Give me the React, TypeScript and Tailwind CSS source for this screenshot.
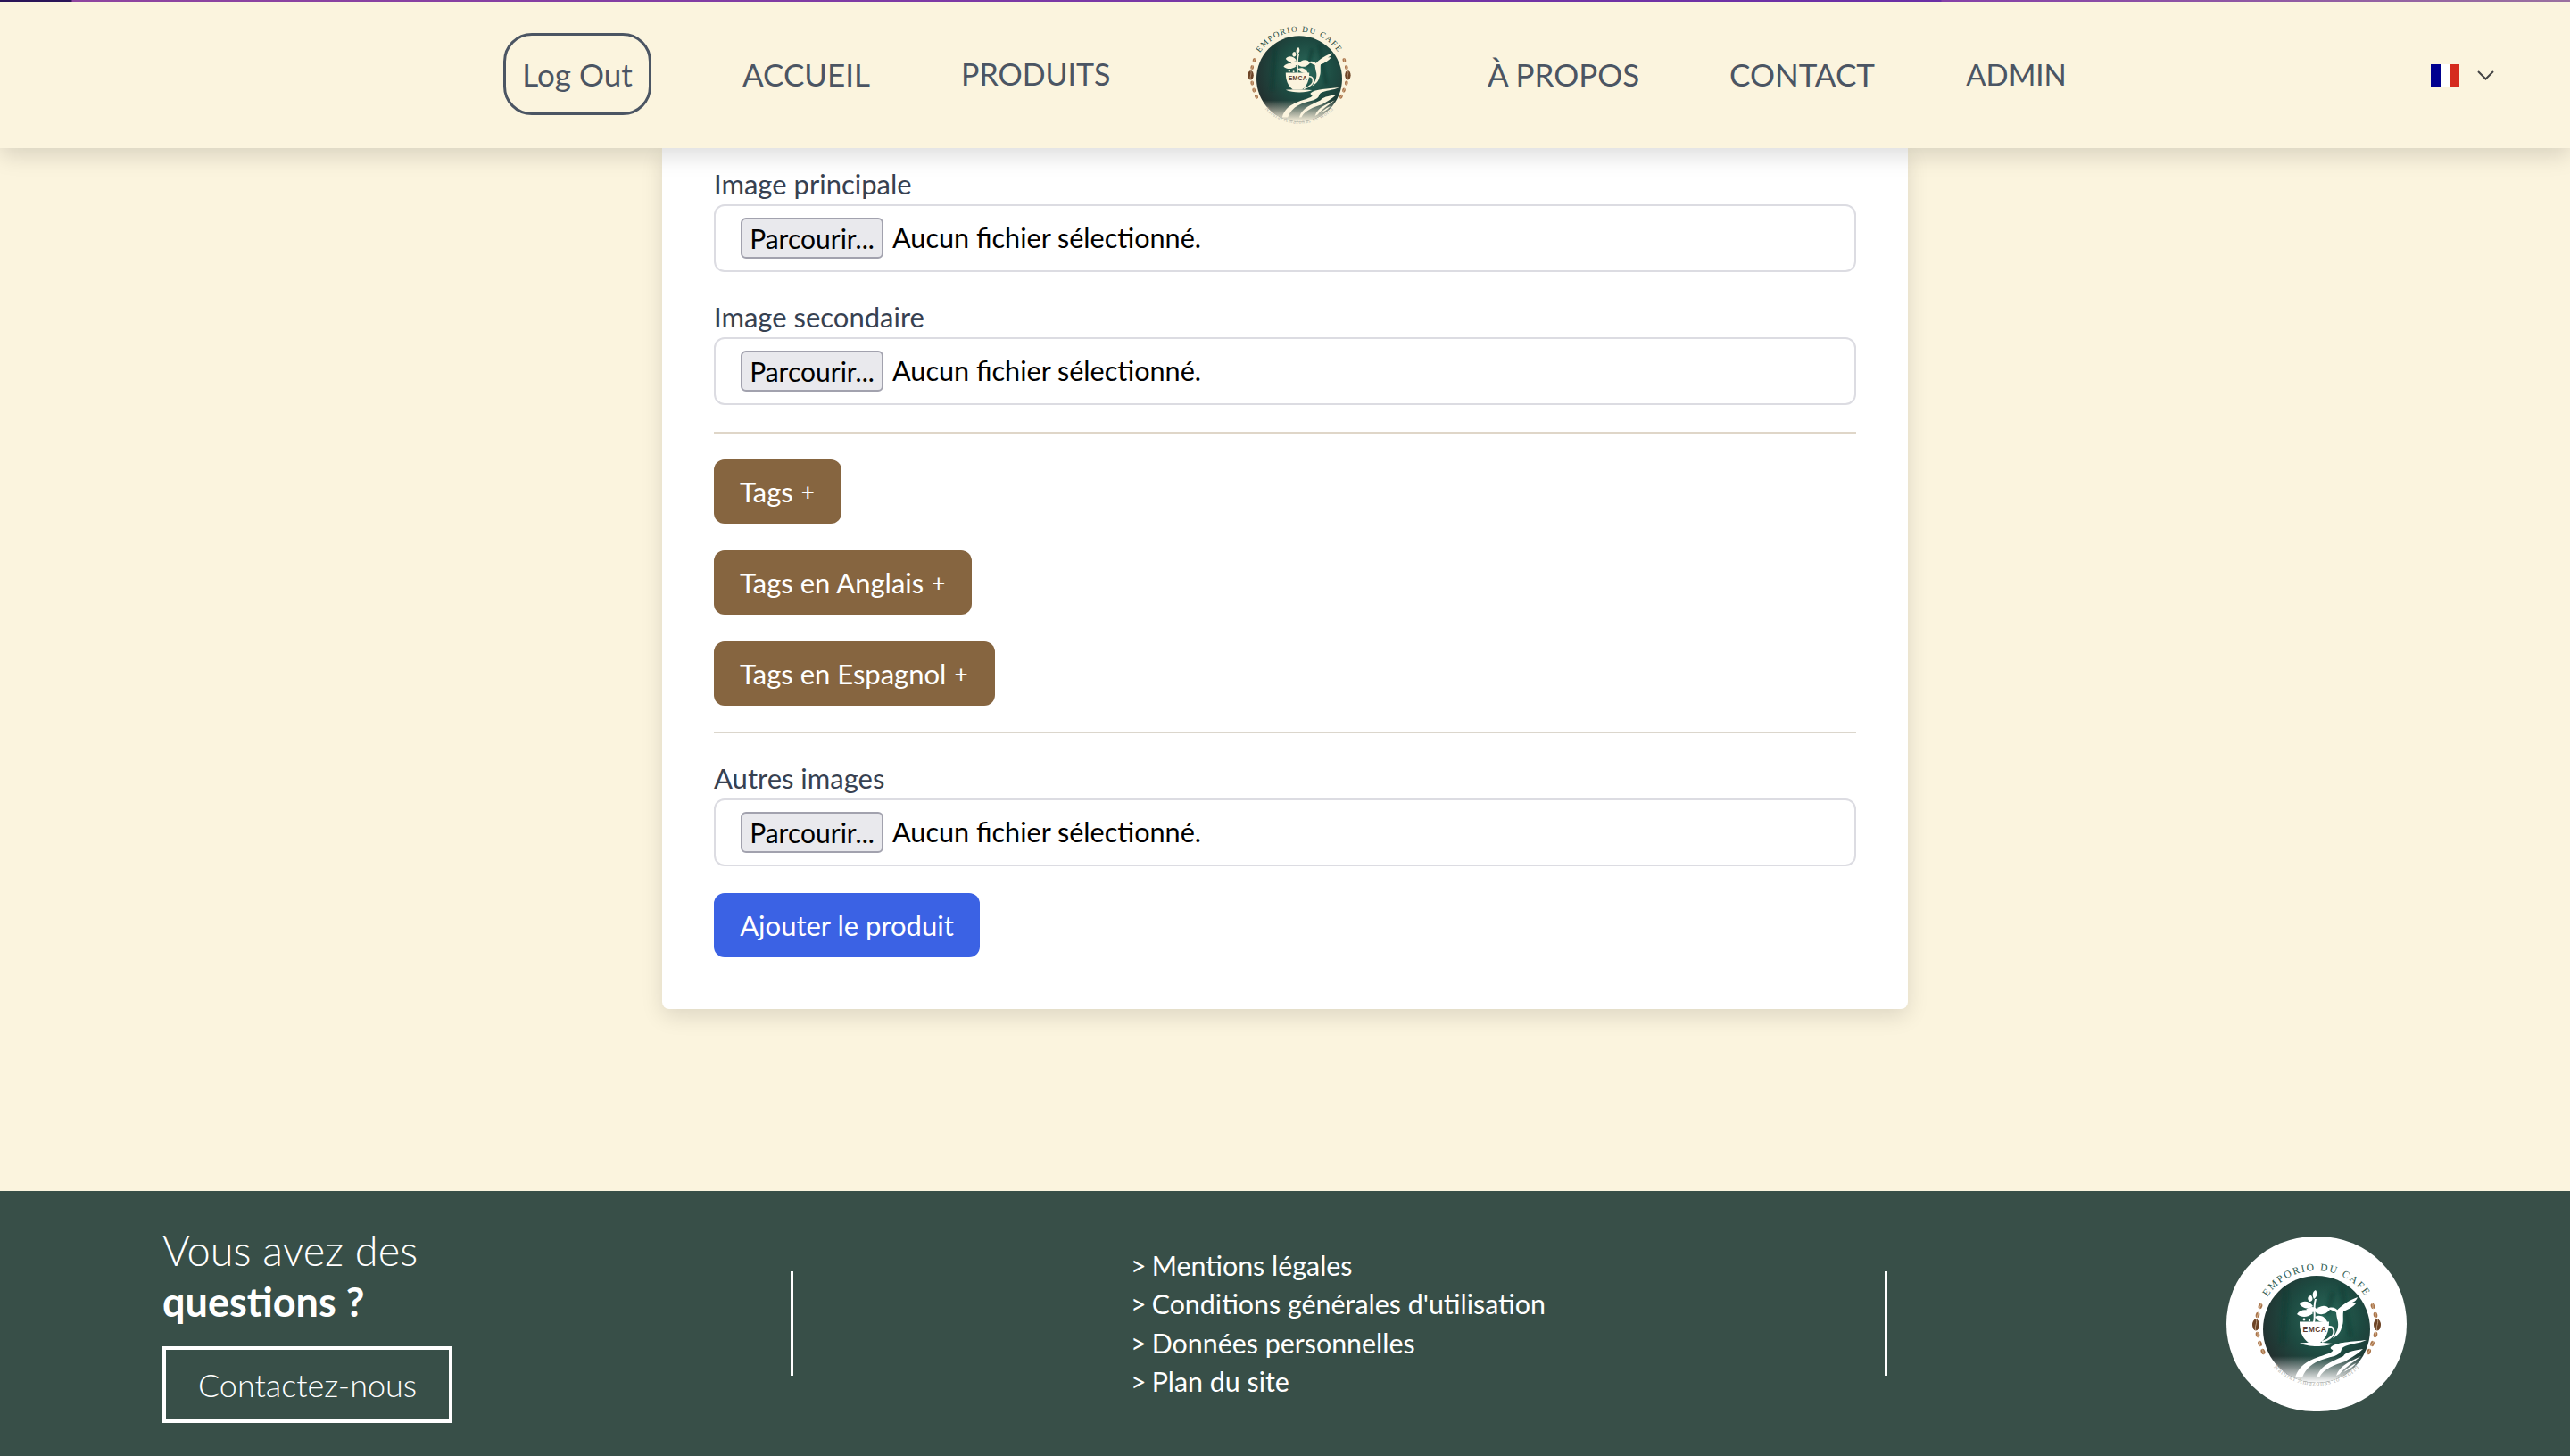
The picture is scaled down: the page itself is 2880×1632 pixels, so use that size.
const font = "font-['Lato','Liberation_Sans',sans-serif]";

function Bean({ x, y, big, angle }: { x: number; y: number; big?: boolean; angle: number }) {
  const rx = big ? 4 : 2.3;
  const ry = big ? 6.5 : 3.2;
  return (
    <g transform={`translate(${x} ${y}) rotate(${angle})`}>
      <ellipse rx={rx} ry={ry} fill={big ? "#6d4426" : "#a9744a"} />
      <path d={`M0 ${-ry} C${rx * 0.6} ${-ry * 0.3} ${-rx * 0.6} ${ry * 0.3} 0 ${ry}`} stroke="#f2dcc0" strokeWidth="0.6" fill="none" />
    </g>
  );
}

function Logo({ id, paper, ink }: { id: string; paper: string; ink: string }) {
  return (
    <svg viewBox="0 0 200 196" className="w-full h-full block">
      <defs>
        <radialGradient id={`${id}-g`} cx="58%" cy="40%" r="62%">
          <stop offset="0%" stopColor="#2b6a5b" />
          <stop offset="55%" stopColor="#1d4a41" />
          <stop offset="100%" stopColor="#22302f" />
        </radialGradient>
        <linearGradient id={`${id}-f`} x1="0" y1="0" x2="0" y2="1">
          <stop offset="0%" stopColor={paper} stopOpacity="0" />
          <stop offset="100%" stopColor={paper} stopOpacity="1" />
        </linearGradient>
        <filter id={`${id}-b`}><feGaussianBlur stdDeviation="2" /></filter>
        <path id={`${id}-top`} d="M34 104 A66 66 0 0 1 166 104" />
        <path id={`${id}-bot`} d="M33 100 A67 67 0 0 0 167 100" />
      </defs>
      <circle cx="100" cy="104" r="60" fill={`url(#${id}-g)`} />
      <g filter={`url(#${id}-b)`} stroke="#0f3a32" strokeWidth="5" opacity="0.6" fill="none">
        <path d="M66 58 L62 120" />
        <path d="M128 56 L138 112" />
        <path d="M118 62 L112 88" />
      </g>
      <path d="M48 134 A60 60 0 0 0 152 134 Z" fill={`url(#${id}-f)`} />
      <text fontFamily="'Liberation Serif',serif" fontSize="11.5" fill={ink} letterSpacing="1.8" textAnchor="middle">
        <textPath href={`#${id}-top`} startOffset="50%">EMPORIO DU CAFE</textPath>
      </text>
      <text fontFamily="'Liberation Serif',serif" fontSize="7.6" fill="#b5b5b0" letterSpacing="0.9" textAnchor="middle">
        <textPath href={`#${id}-bot`} startOffset="50%">Natural Amazonas to World</textPath>
      </text>
      <g fill={paper}>
        <path d="M98 70 C95 80 98 90 96 96 L98 96 C100 90 97 80 100 70 Z" />
        <path d="M99 60 C95 62 95 66 97 70 C100 68 102 64 99 60 Z" />
        <path d="M94 66 C90 66 89 70 92 73 C95 73 97 70 94 66 Z" />
        <path d="M81 76 C84 71 92 72 96 78 C91 82 85 81 81 76 Z" />
        <path d="M78 87 C82 81 91 81 96 86 C90 91 83 91 78 87 Z" />
        <path d="M98 84 C103 76 112 76 115 82 C110 88 103 89 98 84 Z" />
        <path d="M98 90 C104 87 110 90 112 96 C106 97 101 95 98 90 Z" />
        <path d="M88 82 C92 78 98 78 101 82 C97 86 92 86 88 82 Z" />
        <circle cx="86" cy="93" r="1.4" />
        <circle cx="92" cy="94" r="1.2" />
      </g>
      <g fill={paper}>
        <path d="M112 81 C117 78 122 80 125 84 L122 85 C119 83 116 82 112 81 Z" />
        <path d="M122 84 C128 76 140 70 146 68 C145 71 143 73 140 74 C142 74 144 74 145 74 C141 79 135 82 130 84 C129 90 131 96 128 102 C127 108 122 112 118 114 C122 108 125 103 124 96 C123 92 122 88 122 84 Z" />
      </g>
      <path d="M81 95.5 H114 C114 106 111 114 104 119 H91 C84 114 81 106 81 95.5 Z" fill={paper} />
      <path d="M113 101 C120 100 121 108 117 112 C114 115 110 117 106 118" fill="none" stroke={paper} strokeWidth="2" />
      <path d="M81 119.5 C90 118.5 106 118.5 118 120 C110 124 90 124 81 119.5 Z" fill={paper} />
      <text x="98" y="106.5" textAnchor="middle" fontFamily="'Liberation Sans',sans-serif" fontWeight="700" fontSize="8.6" fill="#5a3a30" letterSpacing="0.4">EMCA</text>
      <g fill={paper}>
        <path d="M156 116 C140 118 122 118 116 124 C114 127 122 126 116 130 C102 136 82 138 76 158 L84 158 C90 142 104 138 120 134 C130 130 126 127 130 124 C136 120 148 120 156 116 Z" />
        <path d="M152 126 C140 128 132 130 130 134 C118 140 104 144 100 158 L103 158 C108 148 120 144 132 140 C138 136 146 132 152 126 Z" />
        <path d="M150 134 C138 140 126 144 122 156 L126 154 C130 148 140 142 150 134 Z" />
        <path d="M144 142 C136 146 132 150 130 152 L134 150 C138 148 141 146 144 142 Z" />
      </g>
      <Bean x={37} y={78} angle={15} />
      <Bean x={34} y={88} angle={8} />
      <Bean x={32} y={99} angle={0} big />
      <Bean x={34} y={110} angle={-8} />
      <Bean x={36.5} y={120} angle={-15} />
      <Bean x={40} y={129} angle={-25} />
      <Bean x={163} y={78} angle={-15} />
      <Bean x={166} y={88} angle={-8} />
      <Bean x={168} y={99} angle={0} big />
      <Bean x={166} y={110} angle={8} />
      <Bean x={162.5} y={120} angle={15} />
      <Bean x={158.5} y={129} angle={25} />
    </svg>
  );
}

function FileField({ label }: { label: string }) {
  return (
    <div className="flex flex-col">
      <label className="text-[31px] leading-[46px] text-[#374151]">{label}</label>
      <div className="flex h-[76px] items-center rounded-[12px] border-2 border-[#dcdce2] bg-white pl-[28px]">
        <span className="flex h-[46px] w-[160px] items-center justify-center rounded-[6px] border-2 border-[#a2a2ae] bg-[#e9e9ed] text-[30px] text-black">Parcourir...</span>
        <span className="ml-[10px] text-[30.6px] text-black">Aucun fichier sélectionné.</span>
      </div>
    </div>
  );
}

function TagButton({ label }: { label: string }) {
  return (
    <button className="flex h-[72px] w-fit items-center rounded-[12px] bg-[#866540] pr-[30px] pl-[29px] text-[31px] text-white">
      {label}<span className="ml-[9px] text-[26px]">+</span>
    </button>
  );
}

export default function App() {
  return (
    <div className={`${font} flex h-[1632px] w-[2880px] flex-col overflow-hidden bg-[#fbf4de]`}>
      <header className="relative z-10 h-[166px] shrink-0 bg-[#fbf4de] shadow-[0_8px_24px_rgba(0,0,0,0.14)]">
        <div className="h-[2px] w-full bg-[linear-gradient(90deg,#2a1458_0px,#2a1458_80px,#8f45a0_81px,#7a38a6_1200px,#6a2fa5_2175px,#8540a8_2176px,#9a70a0_2880px)]" />
        <div className="grid h-[164px] grid-cols-[1fr_auto_1fr] items-center">
          <div />
          <nav className="flex -translate-y-[1px] items-center gap-[102px] text-[#4b5563] whitespace-nowrap">
            <button className="flex h-[92px] w-[166px] items-center justify-center rounded-[32px] border-[3px] border-[#4b5563] text-[35px]">Log Out</button>
            <a className="w-[143px] text-center text-[35px] leading-[44px]">ACCUEIL</a>
            <a className="w-[167px] text-center text-[34px] leading-[44px]">PRODUITS</a>
            <div className="flex w-[219px] justify-center"><div className="h-[157px] w-[160px]"><Logo id="h" paper="#fbf4de" ink="#1f4a40" /></div></div>
            <a className="w-[169px] text-center text-[35px] leading-[44px]">À PROPOS</a>
            <a className="w-[163px] text-center text-[35px] leading-[44px]">CONTACT</a>
            <a className="w-[113px] text-center text-[33px] leading-[44px]">ADMIN</a>
          </nav>
          <div className="flex items-center justify-end gap-[20px] pr-[85px]">
            <span className="flex h-[25px] w-[32px]">
              <span className="flex-1 bg-[#00008f]" />
              <span className="flex-1 bg-white" />
              <span className="flex-1 bg-[#d52b1e]" />
            </span>
            <svg width="19" height="11" viewBox="0 0 19 11" fill="none" stroke="#444" strokeWidth="2"><path d="M1 1l8.5 8.5L18 1" /></svg>
          </div>
        </div>
      </header>
      <main className="flex flex-1 items-start justify-center">
        <div className="flex w-[1396px] flex-col rounded-b-[8px] bg-white px-[58px] pt-[17px] pb-[58px] shadow-[0_8px_24px_rgba(0,0,0,0.12)]">
          <FileField label="Image principale" />
          <div className="mt-[27px]"><FileField label="Image secondaire" /></div>
          <hr className="mt-[30px] border-t-2 border-[#dfd6c8]" />
          <div className="mt-[29px] flex flex-col gap-[30px]">
            <TagButton label="Tags" />
            <TagButton label="Tags en Anglais" />
            <TagButton label="Tags en Espagnol" />
          </div>
          <hr className="mt-[29px] border-t-2 border-[#dbd6cc]" />
          <div className="mt-[27px]"><FileField label="Autres images" /></div>
          <button className="mt-[30px] flex h-[72px] w-[298px] items-center justify-center rounded-[12px] bg-[#3b62e4] text-[31px] text-white">Ajouter le produit</button>
        </div>
      </main>
      <footer className="flex h-[297px] shrink-0 items-center bg-[#384f48] pr-[183px] pl-[182px] text-white">
        <div className="w-[704px]">
          <p className="text-[47px] leading-[58px] font-light">Vous avez des</p>
          <p className="text-[45px] leading-[58px] font-bold">questions ?</p>
          <button className="mt-[21px] flex h-[86px] w-[325px] items-center justify-center border-[4px] border-white text-[36px] font-light">Contactez-nous</button>
        </div>
        <div className="h-[117px] w-[3px] bg-white" />
        <ul className="flex-1 pl-[378px] text-[30.4px] leading-[43.4px]">
          <li><span className="mr-[6px]">&gt;</span>Mentions légales</li>
          <li><span className="mr-[6px]">&gt;</span>Conditions générales d'utilisation</li>
          <li><span className="mr-[6px]">&gt;</span>Données personnelles</li>
          <li><span className="mr-[6px]">&gt;</span>Plan du site</li>
        </ul>
        <div className="h-[117px] w-[3px] bg-white" />
        <div className="ml-[380px] h-[196px] w-[202px] shrink-0 rounded-full bg-white"><Logo id="f" paper="#ffffff" ink="#2c5a50" /></div>
      </footer>
    </div>
  );
}
